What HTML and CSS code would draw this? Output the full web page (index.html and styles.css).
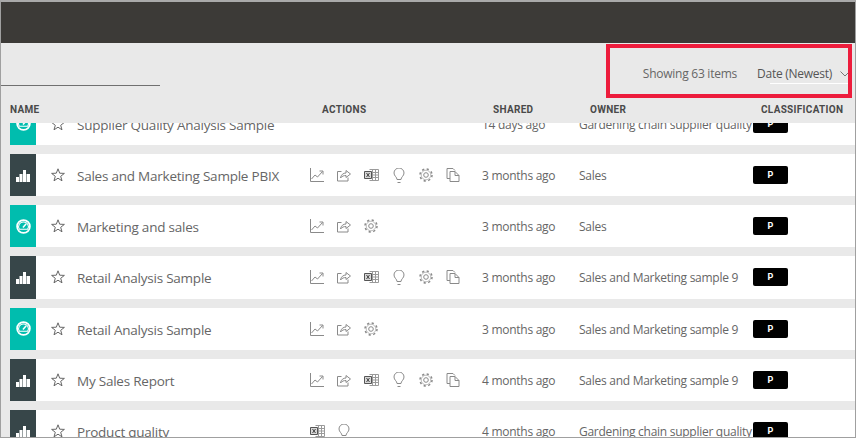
FILE: index.html
```html
<!DOCTYPE html>
<html lang="en">
<head>
<meta charset="utf-8">
<title>Content list</title>
<link rel="stylesheet" href="styles.css">
</head>
<body>
<svg class="defs" width="0" height="0" aria-hidden="true">
  <defs>
    <symbol id="i-star" viewBox="0 0 14 14"><path d="M7 .8l1.700 4.400 4.700.2-3.700 2.900 1.300 4.500L7 10.200l-4 2.600 1.300-4.500L.6 5.400l4.700-.2z" fill="none" stroke="#666" stroke-width="1"/></symbol>
    <symbol id="i-bars" viewBox="0 0 14 12"><path d="M0 7h3v5H0zM3.500 4h3v8h-3zM7 0h3v12H7zM10.500 4H14v8h-3.500z" fill="#fff"/></symbol>
    <symbol id="i-gauge" viewBox="0 0 14 14"><circle cx="7" cy="7" r="6" fill="none" stroke="#fff" stroke-width="1.600"/><path d="M3.200 9.500A4.300 4.300 0 0 1 7 2.800a4.300 4.300 0 0 1 3.800 6.700z" fill="none" stroke="#fff" stroke-width="1"/><path d="M6.500 8l3-3.500" stroke="#fff" stroke-width="1.400"/></symbol>
    <symbol id="i-chart" viewBox="0 0 14 14"><path d="M.5 0v13.500H14M1.500 11l3.500-4 2.500 2L12.500 3.500M9.500 3h3.500v3.500" fill="none" stroke="#8a8a8a" stroke-width="1"/></symbol>
    <symbol id="i-share" viewBox="0 0 14 14"><path d="M4.500 3.500H.5v9.500h10.500V9.500M3.500 10C4 6.500 6.500 5 9 5V2.500L13.500 6 9 9.500V7.500C7 7.500 5 8 3.500 10z" fill="none" stroke="#8a8a8a" stroke-width="1"/></symbol>
    <symbol id="i-excel" viewBox="0 0 15 14"><path d="M5.500 1.500h9v11h-9M8.500 1.500v11M11.500 1.500v11M5.500 4.500h9M5.500 7h9M5.500 9.500h9" fill="none" stroke="#9a9a9a" stroke-width="1"/><path d="M.5 3.500h7v7h-7z" fill="#d8d8d8" stroke="#555" stroke-width="1"/><path d="M2.500 5l3 4M5.500 5l-3 4" stroke="#444" stroke-width="1"/></symbol>
    <symbol id="i-bulb" viewBox="0 0 12 15"><path d="M4 11.500C4 9 1 8 1 5a5 5 0 0 1 10 0c0 3-3 4-3 6.500zM4.500 14.500h3" fill="none" stroke="#8a8a8a" stroke-width="1"/></symbol>
    <symbol id="i-gear" viewBox="0 0 14 14"><circle cx="7" cy="7" r="2.300" fill="none" stroke="#8a8a8a" stroke-width="1"/><circle cx="7" cy="7" r="6" fill="none" stroke="#8a8a8a" stroke-width="1.500" stroke-dasharray="2.200 2.510"/><circle cx="7" cy="7" r="4.800" fill="none" stroke="#a0a0a0" stroke-width=".7"/></symbol>
    <symbol id="i-copy" viewBox="0 0 13 14"><path d="M3.500 10.500H.5V.5h6l2 2M3.500 3.500h5l4 4v6h-9zM8.500 3.500v4h4" fill="none" stroke="#8a8a8a" stroke-width="1"/></symbol>
    <symbol id="i-chev" viewBox="0 0 10 6"><path d="M.5.5L5 5 9.500.5" fill="none" stroke="#777" stroke-width="1"/></symbol>
  </defs>
</svg>
<div class="frame">
  <div class="topbar"></div>
  <div class="toolbar">
    <div class="search-line"></div>
    <div class="summary">
      <span class="count">Showing 63 items</span>
      <div class="sort"><span>Date (Newest)</span><svg class="chev"><use href="#i-chev"/></svg></div>
    </div>
  </div>
  <div class="heads">
    <span class="h-name">NAME</span>
    <span class="h-actions">ACTIONS</span>
    <span class="h-shared">SHARED</span>
    <span class="h-owner">OWNER</span>
    <span class="h-class">CLASSIFICATION</span>
  </div>
  <div class="list">
    <div class="rows">
      <div class="row">
        <div class="tile teal"><svg class="gauge"><use href="#i-gauge"/></svg></div>
        <svg class="star"><use href="#i-star"/></svg>
        <div class="name">Supplier Quality Analysis Sample</div>
        <div class="actions"></div>
        <div class="shared">14 days ago</div>
        <div class="owner">Gardening chain supplier quality</div>
        <div class="badge">P</div>
      </div>
      <div class="row">
        <div class="tile slate"><svg class="bars"><use href="#i-bars"/></svg></div>
        <svg class="star"><use href="#i-star"/></svg>
        <div class="name">Sales and Marketing Sample PBIX</div>
        <div class="actions">
          <svg class="ic"><use href="#i-chart"/></svg><svg class="ic"><use href="#i-share"/></svg><svg class="ic ic-excel"><use href="#i-excel"/></svg><svg class="ic ic-bulb"><use href="#i-bulb"/></svg><svg class="ic"><use href="#i-gear"/></svg><svg class="ic"><use href="#i-copy"/></svg>
        </div>
        <div class="shared">3 months ago</div>
        <div class="owner">Sales</div>
        <div class="badge">P</div>
      </div>
      <div class="row">
        <div class="tile teal"><svg class="gauge"><use href="#i-gauge"/></svg></div>
        <svg class="star"><use href="#i-star"/></svg>
        <div class="name">Marketing and sales</div>
        <div class="actions">
          <svg class="ic"><use href="#i-chart"/></svg><svg class="ic"><use href="#i-share"/></svg><svg class="ic"><use href="#i-gear"/></svg>
        </div>
        <div class="shared">3 months ago</div>
        <div class="owner">Sales</div>
        <div class="badge">P</div>
      </div>
      <div class="row">
        <div class="tile slate"><svg class="bars"><use href="#i-bars"/></svg></div>
        <svg class="star"><use href="#i-star"/></svg>
        <div class="name">Retail Analysis Sample</div>
        <div class="actions">
          <svg class="ic"><use href="#i-chart"/></svg><svg class="ic"><use href="#i-share"/></svg><svg class="ic ic-excel"><use href="#i-excel"/></svg><svg class="ic ic-bulb"><use href="#i-bulb"/></svg><svg class="ic"><use href="#i-gear"/></svg><svg class="ic"><use href="#i-copy"/></svg>
        </div>
        <div class="shared">3 months ago</div>
        <div class="owner">Sales and Marketing sample 9</div>
        <div class="badge">P</div>
      </div>
      <div class="row">
        <div class="tile teal"><svg class="gauge"><use href="#i-gauge"/></svg></div>
        <svg class="star"><use href="#i-star"/></svg>
        <div class="name">Retail Analysis Sample</div>
        <div class="actions">
          <svg class="ic"><use href="#i-chart"/></svg><svg class="ic"><use href="#i-share"/></svg><svg class="ic"><use href="#i-gear"/></svg>
        </div>
        <div class="shared">3 months ago</div>
        <div class="owner">Sales and Marketing sample 9</div>
        <div class="badge">P</div>
      </div>
      <div class="row">
        <div class="tile slate"><svg class="bars"><use href="#i-bars"/></svg></div>
        <svg class="star"><use href="#i-star"/></svg>
        <div class="name">My Sales Report</div>
        <div class="actions">
          <svg class="ic"><use href="#i-chart"/></svg><svg class="ic"><use href="#i-share"/></svg><svg class="ic ic-excel"><use href="#i-excel"/></svg><svg class="ic ic-bulb"><use href="#i-bulb"/></svg><svg class="ic"><use href="#i-gear"/></svg><svg class="ic"><use href="#i-copy"/></svg>
        </div>
        <div class="shared">4 months ago</div>
        <div class="owner">Sales and Marketing sample 9</div>
        <div class="badge">P</div>
      </div>
      <div class="row">
        <div class="tile slate"><svg class="bars"><use href="#i-bars"/></svg></div>
        <svg class="star"><use href="#i-star"/></svg>
        <div class="name">Product quality</div>
        <div class="actions">
          <svg class="ic ic-excel"><use href="#i-excel"/></svg><svg class="ic ic-bulb"><use href="#i-bulb"/></svg>
        </div>
        <div class="shared">4 months ago</div>
        <div class="owner">Gardening chain supplier quality</div>
        <div class="badge">P</div>
      </div>
    </div>
  </div>
  <div class="callout"></div>
</div>
</body>
</html>
```
FILE: styles.css
```css
html, body { margin: 0; padding: 0; }
body { width: 856px; height: 438px; overflow: hidden; background: #e9e9e9; font-family: "Open Sans", "Noto Sans", sans-serif; }
.defs { position: absolute; }
.frame { position: relative; box-sizing: border-box; width: 856px; height: 438px; border-top: 2px solid #a9a9a9; border-left: 1px solid #a0a0a0; border-right: 1px solid #a0a0a0; border-bottom: 1px solid #a0a0a0; display: flex; flex-direction: column; overflow: hidden; background: #e9e9e9; }
.topbar { height: 41px; background: #3c3a37; flex: none; }
.toolbar { height: 57px; flex: none; display: flex; justify-content: space-between; }
.search-line { width: 159px; height: 1px; background: #707070; margin-top: 42px; }
.summary { display: flex; align-items: flex-start; padding-top: 22px; font-size: 12px; line-height: 18px; letter-spacing: -.25px; color: #666; margin-right: 7px; }
.count { margin-right: 20px; }
.sort { position: relative; width: 91px; display: flex; color: #555; justify-content: space-between; }
.sort::after { content: ""; position: absolute; left: 13px; right: 0; top: 18px; height: 1px; background: #fff; }
.chev { width: 10px; height: 6px; margin-top: 6px; margin-right: -2px; }
.heads { height: 23px; flex: none; font: 700 10px/14px Roboto, sans-serif; letter-spacing: .3px; color: #4a4a4a; display: grid; grid-template-columns: 312px 171px 97px 171px 1fr; padding-left: 9px; }
.heads span { padding-top: 3px; }
.list { flex: 1; min-height: 0; overflow: hidden; }
.rows { margin-top: -20.200px; display: flex; flex-direction: column; gap: 9px; }
.row { height: 42.200px; flex: none; margin-left: 9px; background: #fff; display: flex; align-items: center; font-size: 12px; letter-spacing: -.27px; color: #666; }
.tile { width: 26px; align-self: stretch; flex: none; display: flex; align-items: center; justify-content: center; }
.teal { background: #00bdae; }
.slate { background: #374649; }
.bars { width: 14px; height: 12px; margin-top: 2px; }
.gauge { width: 15px; height: 15px; }
.star { width: 14px; height: 14px; margin-left: 15px; flex: none; }
.name { width: 233px; flex: none; margin-left: 12px; margin-top: 2px; font-size: 13.500px; letter-spacing: -.23px; white-space: nowrap; }
.actions { width: 172px; flex: none; display: flex; gap: 13.200px; align-items: center; }
.ic { width: 14px; height: 14px; flex: none; }
.ic-excel { width: 15px; margin-right: -1px; }
.ic-bulb { width: 12px; height: 15px; margin: 0 1px; }
.shared { width: 97px; flex: none; margin-top: 1px; }
.owner { width: 174px; flex: none; margin-top: 1px; white-space: nowrap; }
.badge { width: 35px; height: 18px; flex: none; background: #000; border-radius: 2px; color: #fff; font: 700 9px/18px Roboto, sans-serif; letter-spacing: 0; text-align: center; }
.callout { position: absolute; left: 605px; top: 42px; width: 238px; height: 46px; border: 4px solid #ed1c3c; pointer-events: none; }
```
